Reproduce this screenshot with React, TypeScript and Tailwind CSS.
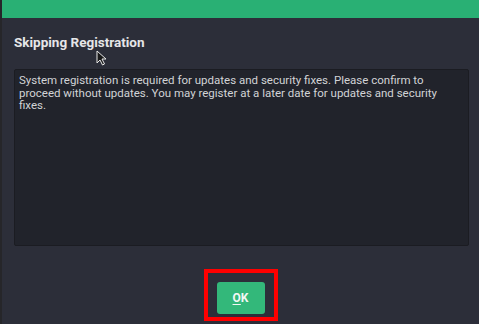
import React from "react";

export default function App() {
  return (
    <div
      className="relative flex h-[324px] w-[479px] overflow-hidden bg-[#2c2e39]"
      style={{ fontFamily: "Roboto, 'Liberation Sans', sans-serif" }}
    >
      <div className="w-[2px] shrink-0 bg-[#26262a]" />
      <div className="flex flex-1 flex-col">
        <div className="h-[18px] shrink-0 bg-[#29b074]" />
        <div className="flex flex-1 flex-col px-[12px]">
          <div className="pt-[16px] text-[13.5px] font-bold leading-[16px] text-[#e6e6e8]">
            Skipping Registration
          </div>
          <div className="mt-[19px] h-[177px] w-[455px] rounded-[2px] border border-[#1b1c22] bg-[#21232b] pl-[4px] pr-[10px] pt-[4px] text-[11.5px] leading-[12.5px] text-[#d2d3d6]">
            System registration is required for updates and security fixes. Please confirm to proceed without updates. You may register at a later date for updates and security fixes.
          </div>
          <div className="mt-[23px] flex justify-center">
            <div className="ml-[-2px] border-[4px] border-[#ff0000] px-[9px] pb-[3px] pt-[9px]">
              <button className="flex h-[32px] w-[48px] items-center justify-center rounded-[3px] bg-[#33b87a] text-[12px] font-bold text-[#f2f7f4]">
                <span className="underline underline-offset-[2px]">O</span>K
              </button>
            </div>
          </div>
        </div>
      </div>
      <svg
        className="absolute left-[96px] top-[50px]"
        width="12"
        height="16"
        viewBox="0 0 12 16"
      >
        <path
          d="M1 1 L1 13 L4 10 L6.5 15 L8.5 14 L6 9 L10 9 Z"
          fill="#1a1a1a"
          stroke="#e8e8e8"
          strokeWidth="1"
          strokeLinejoin="round"
        />
      </svg>
    </div>
  );
}
